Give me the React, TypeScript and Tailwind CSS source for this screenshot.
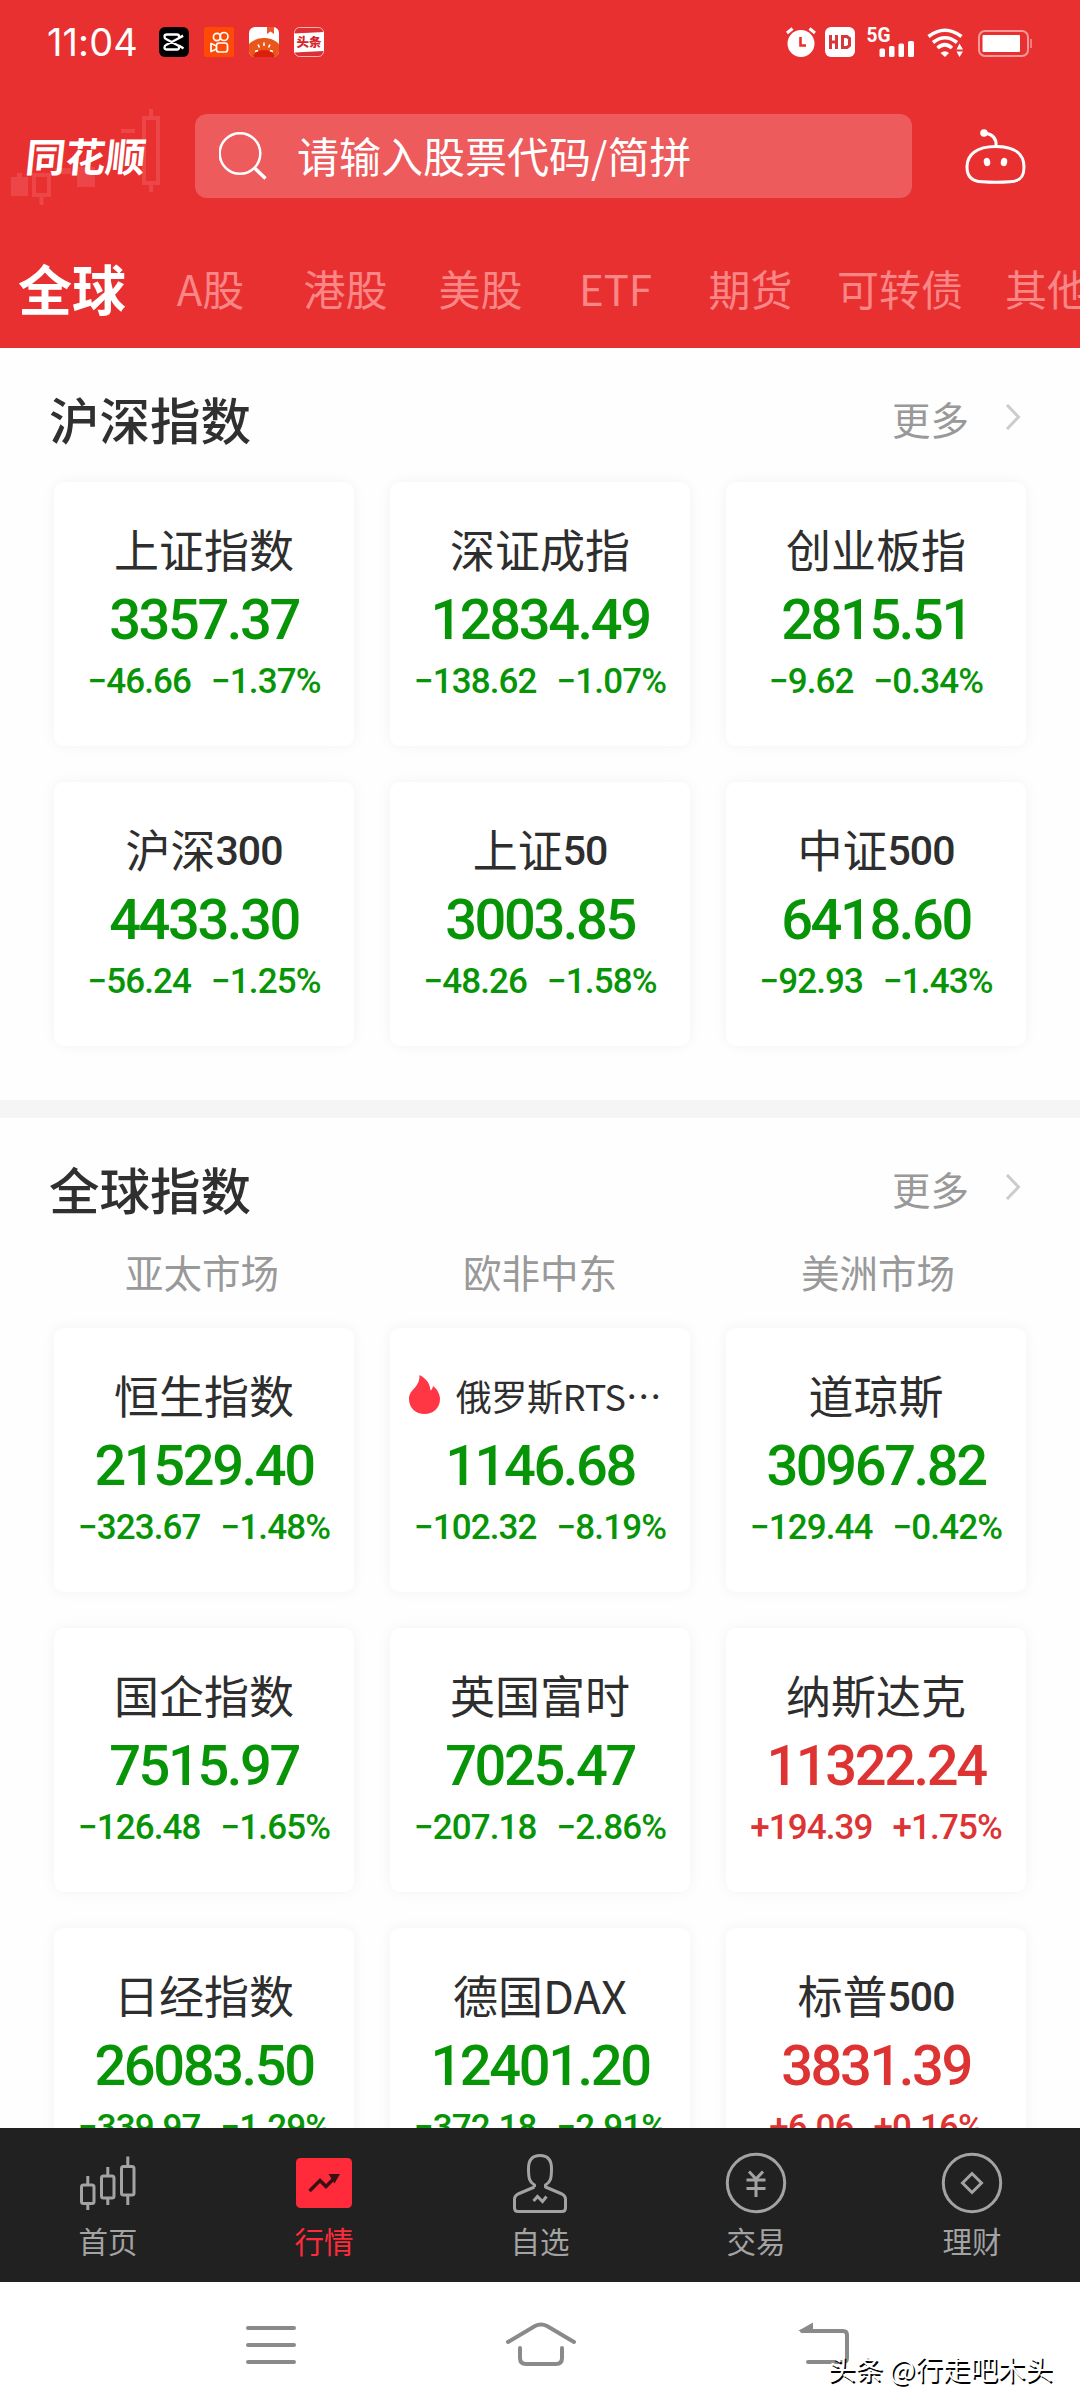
import { ReactNode } from 'react';
import clsx from 'clsx';

interface Quote {
  name: string;
  code?: string;
  value: string;
  change: string;
  percent: string;
  hot?: boolean;
}

const tabs = ['A股', '港股', '美股', 'ETF', '期货'];

const domestic: Quote[] = [
  { name: '上证指数', value: '3357.37', change: '−46.66', percent: '−1.37%' },
  { name: '深证成指', value: '12834.49', change: '−138.62', percent: '−1.07%' },
  { name: '创业板指', value: '2815.51', change: '−9.62', percent: '−0.34%' },
  { name: '沪深', code: '300', value: '4433.30', change: '−56.24', percent: '−1.25%' },
  { name: '上证', code: '50', value: '3003.85', change: '−48.26', percent: '−1.58%' },
  { name: '中证', code: '500', value: '6418.60', change: '−92.93', percent: '−1.43%' },
];

const regions = ['亚太市场', '欧非中东', '美洲市场'];

const global: Quote[] = [
  { name: '恒生指数', value: '21529.40', change: '−323.67', percent: '−1.48%' },
  { name: '俄罗斯RTS…', value: '1146.68', change: '−102.32', percent: '−8.19%', hot: true },
  { name: '道琼斯', value: '30967.82', change: '−129.44', percent: '−0.42%' },
  { name: '国企指数', value: '7515.97', change: '−126.48', percent: '−1.65%' },
  { name: '英国富时', value: '7025.47', change: '−207.18', percent: '−2.86%' },
  { name: '纳斯达克', value: '11322.24', change: '+194.39', percent: '+1.75%' },
  { name: '日经指数', value: '26083.50', change: '−339.97', percent: '−1.29%' },
  { name: '德国DAX', value: '12401.20', change: '−372.18', percent: '−2.91%' },
  { name: '标普', code: '500', value: '3831.39', change: '+6.06', percent: '+0.16%' },
];

export default function App() {
  return (
    <div
      lang="zh-CN"
      className="flex h-[2408px] w-[1080px] flex-col overflow-hidden bg-white font-['Noto_Sans_CJK_SC',sans-serif]"
    >
      <header className="h-[348px] shrink-0 bg-[#e83031] text-white">
        <StatusBar />
        <SearchRow />
        <Tabs />
      </header>

      <main className="h-[1780px] shrink-0 overflow-hidden bg-[#fefefe]">
        <section className="h-[752px]">
          <SectionTitle title="沪深指数" />
          <QuoteGrid quotes={domestic} />
        </section>
        <div className="h-[18px] bg-[#f5f5f5]" />
        <section>
          <SectionTitle title="全球指数" />
          <div className="-mt-[10px] mb-[28px] grid h-[58px] grid-cols-3 items-center px-[33px] text-center text-[38.5px] leading-none text-[#999]">
            {regions.map((r) => (
              <span key={r}>{r}</span>
            ))}
          </div>
          <QuoteGrid quotes={global} />
        </section>
      </main>

      <BottomNav />
      <SystemNav />
    </div>
  );
}

function StatusBar() {
  return (
    <div className="flex h-[84px] items-center pl-[47px] pr-[48px]">
      <span className="w-[112px] font-['Inter',sans-serif] text-[38px] leading-none tracking-[0.1px]">11:04</span>
      <div className="flex gap-[15px]">
        <svg width="30" height="30" viewBox="0 0 30 30">
          <rect width="30" height="30" rx="6" fill="#000" />
          <path
            d="M24 8.5 20 11V9.5Q20 7.5 18 7.5H8Q5.5 7.5 5.5 9.5T7 12L20 19V20.5Q20 22.5 18 22.5H8Q5.5 22.5 5.5 20.5T7 18L24 9M20 18.5 24.5 21.5"
            fill="none"
            stroke="#fff"
            strokeWidth="2.3"
            strokeLinejoin="round"
          />
        </svg>
        <svg width="30" height="30" viewBox="0 0 30 30">
          <rect width="30" height="30" rx="2" fill="#ff4906" />
          <g fill="none" stroke="#fff" strokeWidth="1.7">
            <circle cx="13" cy="10" r="3.6" />
            <circle cx="20" cy="9.5" r="4" />
            <rect x="12.5" y="16" width="11" height="9" rx="2.5" />
            <path d="M12.5 19 7 16.5V24.5L12.5 22" strokeLinejoin="round" />
          </g>
        </svg>
        <svg width="30" height="30" viewBox="0 0 30 30">
          <clipPath id="tomato">
            <rect width="30" height="30" rx="6" />
          </clipPath>
          <g clipPath="url(#tomato)">
            <rect width="30" height="30" fill="#fff" />
            <path d="M18 0h7v7l-3.5-2.500L18 7z" fill="#e8562f" />
            <ellipse cx="15" cy="25" rx="18" ry="14" fill="#e8561a" />
            <ellipse cx="15" cy="31" rx="11" ry="8" fill="#d8200c" />
            <path
              d="M15 15.5v3.500M9 17.500l1.500 3M21 17.500l-1.500 3M6 24.500l3-1M24 24.500l-3-1"
              stroke="#fff"
              strokeWidth="1.6"
            />
          </g>
        </svg>
        <svg width="30" height="30" viewBox="0 0 30 30">
          <rect x=".5" y=".5" width="29" height="29" rx="5" fill="#dd3036" stroke="#f5b5b5" />
          <path d="M0 6.500 30 5v19L0 25.500z" fill="#fff" />
          <text x="15" y="19.5" textAnchor="middle" fontSize="12.5" fontWeight="900" fill="#d4252c">
            头条
          </text>
        </svg>
      </div>

      <div className="ml-auto flex items-center">
        <svg width="30" height="30" viewBox="0 0 30 30">
          <circle cx="15" cy="16.5" r="13.5" fill="#fff" />
          <path d="M1 6 6.500 1.500M29 6 23.500 1.500" stroke="#fff" strokeWidth="3" />
          <path d="M14.500 10v8.500H20" fill="none" stroke="#e83031" strokeWidth="2.6" />
        </svg>
        <svg className="ml-[9px]" width="30" height="30" viewBox="0 0 30 30">
          <rect width="30" height="30" rx="6" fill="#fff" />
          <path
            d="M5.500 8v14M11.500 8v14M5.500 15h6M17.500 9.500V20.500M16 9.500H22L24.500 11.500V18.500L22 20.500H16"
            fill="none"
            stroke="#d5393b"
            strokeWidth="3"
          />
        </svg>
        <svg className="ml-[12px]" width="48" height="30" viewBox="0 0 48 30">
          <text
            x="-0.5"
            y="15"
            fontSize="20"
            fontWeight="700"
            fill="#fff"
            textLength="24"
            lengthAdjust="spacingAndGlyphs"
            fontFamily="Roboto"
          >
            5G
          </text>
          <g fill="#fff">
            <rect x="12.5" y="21.5" width="5.5" height="8.5" rx="1.5" />
            <rect x="22" y="19" width="5.5" height="11" rx="1.5" />
            <rect x="31.5" y="16.5" width="5.5" height="13.5" rx="1.5" />
            <rect x="41" y="14" width="6" height="16" rx="1.5" />
          </g>
        </svg>
        <svg className="ml-[12px]" width="37" height="30" viewBox="0 0 37 30">
          <g fill="none" stroke="#fff" strokeWidth="3.6">
            <path d="M1.500 9.500Q18 -3 34.500 9.500" />
            <path d="M6 15.500Q18 6 30 15.500" />
            <path d="M10.500 21Q18 14.500 25 21" />
          </g>
          <path d="M13.500 26Q18 22.500 22 26L18 30z" fill="#fff" />
          <path d="M29.500 22.500 32.500 16.500 36 22.500zM29.500 24.500 32.500 30 36 24.500z" fill="#fff" />
        </svg>
        <svg className="ml-[14px] mt-[2px]" width="54" height="27" viewBox="0 0 54 27">
          <rect x="1" y="1" width="49" height="25" rx="6" fill="none" stroke="#f79a9a" strokeWidth="2" />
          <rect x="4.5" y="5" width="37.5" height="17" rx="1" fill="#fff" />
          <rect x="52" y="9" width="2" height="9" fill="#f07c7c" />
        </svg>
      </div>
    </div>
  );
}

function SearchRow() {
  return (
    <div className="flex h-[144px] items-center">
      <div className="relative h-[104px] w-[195px] shrink-0">
        <svg className="absolute left-0 top-0" width="195" height="104" viewBox="0 0 195 104">
          <g fill="#f05355" opacity=".65">
            <path d="M11 73h6v-4h5v4h6v19H11z" />
            <path d="M77 63h18v20H77zM55 64h16v6H55z" />
            <path d="M121 25h14v4h-14z" />
          </g>
          <g fill="none" stroke="#f05355" strokeWidth="4" opacity=".65">
            <path d="M34 71h15v20H34zM41.500 91v10" />
            <path d="M144 14h14v65h-14zM151 5v9M151 79v9" />
          </g>
        </svg>
        <span className="absolute left-[26px] top-[31px] inline-block -skew-x-6 whitespace-nowrap text-[40px] font-bold leading-[40px]">
          同花顺
        </span>
      </div>
      <div className="flex h-[84px] w-[717px] items-center rounded-[12px] bg-[#ed5b5c]">
        <svg
          className="ml-[24px]"
          width="48"
          height="48"
          viewBox="0 0 48 48"
          fill="none"
          stroke="#fff"
          strokeWidth="2.5"
        >
          <circle cx="21" cy="21.5" r="20.3" />
          <path d="M35 35.500 46.500 46.500" strokeWidth="3.5" />
        </svg>
        <span className="ml-[30px] pb-[3px] text-[42px] leading-none">请输入股票代码/简拼</span>
      </div>
      <svg className="ml-[52px]" width="64" height="56" viewBox="0 0 64 56" fill="none" stroke="#fff" strokeWidth="3">
        <path d="M32 18.500C52 18.500 60 27 60 39C60 49 56 53.500 46 53.800Q32 54.800 18 53.800C8 53.500 3 49 3 39C3 27 12 18.500 32 18.500Z" />
        <path d="M32 18Q33 7 21 5" />
        <circle cx="20" cy="5" r="3.8" fill="#fff" stroke="none" />
        <ellipse cx="23" cy="34" rx="3.2" ry="4.2" fill="#fff" stroke="none" transform="rotate(-12 23 34)" />
        <ellipse cx="40" cy="34" rx="3.2" ry="4.2" fill="#fff" stroke="none" transform="rotate(12 40 34)" />
      </svg>
    </div>
  );
}

function Tabs() {
  return (
    <nav className="flex h-[120px] items-center overflow-hidden whitespace-nowrap pb-[1px] text-[42px] leading-none text-[#fa8686]">
      <span className="w-[143px] shrink-0 pl-[18px] text-[54px] font-bold text-white">全球</span>
      {tabs.map((t) => (
        <span key={t} className="w-[135px] shrink-0 text-center">
          {t}
        </span>
      ))}
      <span className="w-[164px] shrink-0 text-center">可转债</span>
      <span className="w-[135px] shrink-0 pl-[23px]">其他</span>
    </nav>
  );
}

function SectionTitle({ title }: { title: string }) {
  return (
    <div className="flex h-[134px] items-center pl-[49px] pr-[59px] pt-[6px]">
      <h2 className="text-[50.5px] font-medium leading-none text-[#303030]">{title}</h2>
      <span className="ml-auto text-[38.5px] leading-none text-[#999]">更多</span>
      <svg
        className="ml-[36px] mt-[-2px]"
        width="16"
        height="26"
        viewBox="0 0 16 26"
        fill="none"
        stroke="#ccc"
        strokeWidth="3"
      >
        <path d="M2 1 13.500 13 2 25" />
      </svg>
    </div>
  );
}

function QuoteGrid({ quotes }: { quotes: Quote[] }) {
  return (
    <div className="grid grid-cols-3 gap-[36px] px-[54px]">
      {quotes.map((q) => (
        <QuoteCard key={q.name + q.value} quote={q} />
      ))}
    </div>
  );
}

function QuoteCard({ quote }: { quote: Quote }) {
  const up = quote.change.startsWith('+');

  return (
    <div
      className={clsx(
        'flex h-[264px] flex-col items-center rounded-[10px] bg-white pt-[34px] shadow-[0_0_14px_rgba(0,0,0,0.05)]',
        up ? 'text-[#dd3333]' : 'text-[#079507]'
      )}
    >
      <div
        className={clsx(
          'flex h-[64px] items-center whitespace-nowrap leading-none text-[#2e2e2e]',
          quote.hot && 'pr-[10px]'
        )}
      >
        {quote.hot && (
          <svg className="mr-[16px]" width="31" height="39" viewBox="0 0 31 39">
            <path
              d="M10.500 0C18 4 21 9 21.500 15.500C23 14.500 23.500 13 24 11C28 14 31 19 31 24C31 33 24 39 15.500 39S0 33 0 24C0 14 11 13 10.500 0Z"
              fill="#ff3644"
            />
          </svg>
        )}
        <span className={quote.hot ? 'pt-[2px] text-[36px] tracking-[-0.3px]' : 'text-[45px]'}>{quote.name}</span>
        {quote.code && (
          <span className="pt-[7px] font-['Roboto',sans-serif] text-[41px] font-medium tracking-[-1px]">
            {quote.code}
          </span>
        )}
      </div>
      <div className="flex h-[76px] items-center pt-[4px] font-['Roboto',sans-serif] text-[56px] font-medium leading-none tracking-[-2.4px]">
        {quote.value}
      </div>
      <div className="flex h-[50px] items-center gap-[20px] font-['Roboto',sans-serif] text-[35px] font-medium leading-none tracking-[-0.9px]">
        <span>{quote.change}</span>
        <span>{quote.percent}</span>
      </div>
    </div>
  );
}

function NavItem({ label, active, children }: { label: string; active?: boolean; children: ReactNode }) {
  return (
    <div className={clsx('flex flex-1 flex-col items-center pt-[24px]', active ? 'text-[#ff2a3a]' : 'text-[#a3a3a3]')}>
      <svg width="62" height="62" viewBox="0 0 62 62" fill="none" stroke="currentColor" strokeWidth="3">
        {children}
      </svg>
      <span className="mt-[11px] text-[29.5px] leading-[30px]">{label}</span>
    </div>
  );
}

function BottomNav() {
  return (
    <nav className="flex h-[154px] shrink-0 bg-[#212121]">
      <NavItem label="首页">
        <rect x="4.5" y="33" width="12.5" height="18.5" rx="2" />
        <rect x="24.5" y="24" width="12.5" height="22" rx="2" />
        <rect x="44.5" y="14.5" width="12.5" height="28.5" rx="2" />
        <path d="M10.800 24v9M10.800 52v6M30.800 15v9M30.800 46v7M50.800 4.500v10M50.800 43v10" />
      </NavItem>
      <NavItem label="行情" active>
        <rect x="3" y="6" width="56" height="50" rx="4.5" fill="currentColor" stroke="none" />
        <path d="M16.500 39 27 28.500 33 34.500 43 24.500" stroke="#3a1013" strokeWidth="3.5" />
        <path d="M35.500 22H47L41.500 31.500z" fill="#3a1013" stroke="none" />
      </NavItem>
      <NavItem label="自选">
        <path
          d="M25.500 35V33C20.500 30 19.500 27 19.500 16.500C19.500 7.500 24 3.500 31 3.500S42.500 7.500 42.500 16.500C42.500 27 41.500 30 36.500 33V35L53 42Q56.500 44 56.500 47V56Q56.500 59.500 53 59.500H9Q5.500 59.500 5.500 56V47Q5.500 44 9 42L25.500 35"
          strokeLinejoin="round"
        />
        <path d="M24.500 49 28.500 44.500 33.500 49.500 37.500 44.500" />
      </NavItem>
      <NavItem label="交易">
        <circle cx="31" cy="31" r="28.7" />
        <path d="M24 19.500 31 27 38 19.500M31 27V45M21.500 28H40.500M21.500 36.500H40.500" />
      </NavItem>
      <NavItem label="理财">
        <circle cx="31" cy="31" r="28.7" />
        <path d="M31 21.500 40.500 31 31 40.500 21.500 31Z" />
      </NavItem>
    </nav>
  );
}

function SystemNav() {
  return (
    <div className="relative flex h-[126px] shrink-0 items-start bg-white pl-[246px] pt-[38px]">
      <svg width="50" height="48" viewBox="0 0 50 48" stroke="#8a8a8a" strokeWidth="4" strokeLinecap="round">
        <path d="M2 8H48M2 25H48M2 42H48" />
      </svg>
      <svg
        className="ml-[208px]"
        width="74"
        height="48"
        viewBox="0 0 74 48"
        fill="none"
        stroke="#8a8a8a"
        strokeWidth="4"
        strokeLinecap="round"
      >
        <path d="M4 22 31 6Q37 3 43 6L70 22" />
        <path d="M16 28V38Q16 44 22 44H52Q58 44 58 38V28" />
      </svg>
      <svg
        className="ml-[220px]"
        width="54"
        height="48"
        viewBox="0 0 54 48"
        fill="none"
        stroke="#8a8a8a"
        strokeWidth="4"
        strokeLinecap="round"
      >
        <path d="M4 11H45Q49 11 49 15V38Q49 42 45 42H10" />
        <path d="M0 11 15 2.500V12z" fill="#8a8a8a" stroke="none" />
      </svg>
      <span className="absolute left-[828px] top-[71px] whitespace-nowrap text-[27.5px] leading-[30px] text-white [text-shadow:1.5px_1.5px_0_#000]">
        头条 @行走吧木头
      </span>
    </div>
  );
}
